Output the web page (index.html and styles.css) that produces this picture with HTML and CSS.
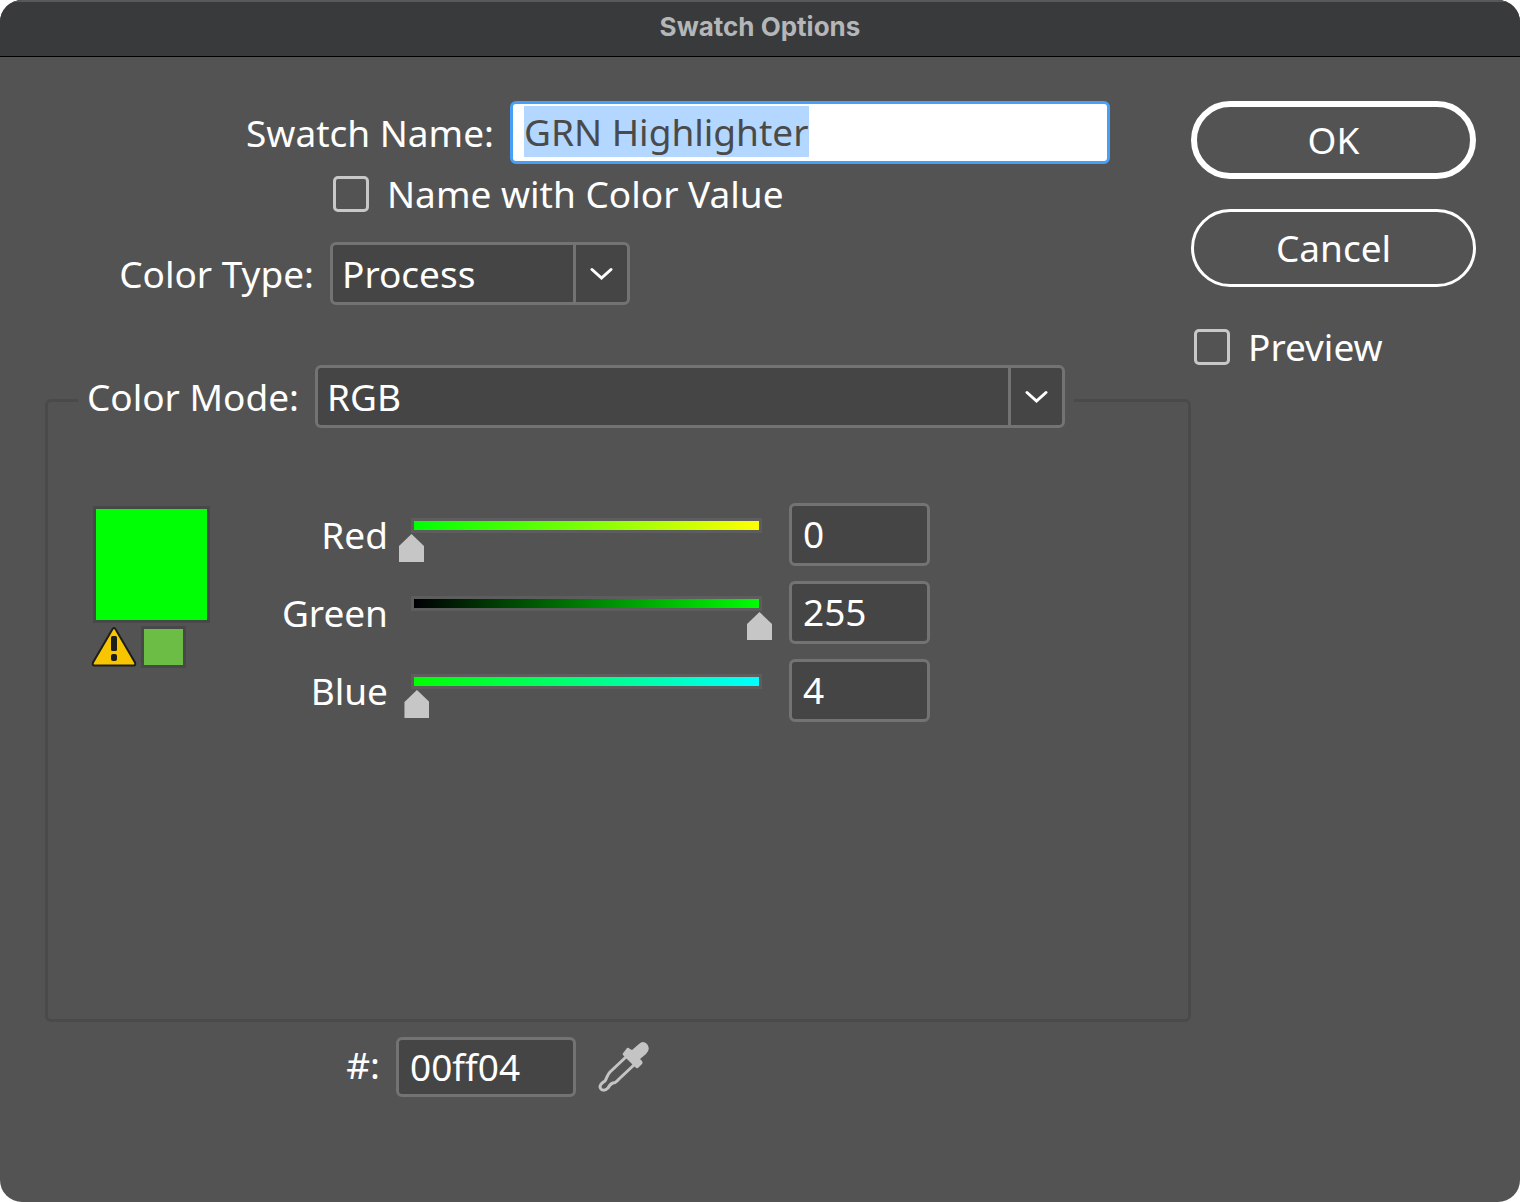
FILE: index.html
```html
<!DOCTYPE html>
<html lang="en">
<head>
    <meta charset="UTF-8">
    <meta name="viewport" content="width=device-width, initial-scale=1.0">
    <title>Swatch Options</title>
    <link rel="stylesheet" href="styles.css">
</head>
<body>

    <form class="dialog">
        <header class="titlebar">
            <h1>Swatch Options</h1>
        </header>

        <div class="content">
            <main class="main">
                <div class="row name-row">
                    <label for="swatchName">Swatch Name:</label>
                    <input type="text" id="swatchName" class="name-input" value="GRN Highlighter" spellcheck="false" autocomplete="off">
                </div>

                <div class="row check-row">
                    <input type="checkbox" id="nameWithValue">
                    <label for="nameWithValue">Name with Color Value</label>
                </div>

                <div class="row type-row">
                    <label for="colorType">Color Type:</label>
                    <div class="select">
                        <select id="colorType">
                            <option selected>Process</option>
                        </select>
                        <span class="arrow">
                            <svg width="24" height="14" viewBox="0 0 24 14"><path d="M2 2.500L11.500 11L21 2.500"/></svg>
                        </span>
                    </div>
                </div>

                <fieldset class="mode">
                    <legend>
                        <div class="row mode-row">
                            <label for="colorMode">Color Mode:</label>
                            <div class="select">
                                <select id="colorMode">
                                    <option selected>RGB</option>
                                </select>
                                <span class="arrow">
                                    <svg width="24" height="14" viewBox="0 0 24 14"><path d="M2 2.500L11.500 11L21 2.500"/></svg>
                                </span>
                            </div>
                        </div>
                    </legend>

                    <div class="mixer">
                        <div class="preview">
                            <div class="swatch"></div>
                            <div class="gamut">
                                <svg width="45" height="42" viewBox="0 0 45 42">
                                    <path d="M19.4 3.200Q21 .8 22.600 3.200L42 36.500Q43 39.500 40.500 39.500H1.500Q-1 39.500 0 36.500Z" fill="#f7c600" stroke="#1d1d1b" stroke-width="2"/>
                                    <rect x="18" y="10" width="6" height="15" rx="1.500" fill="#1d1d1b"/>
                                    <rect x="18" y="28" width="6" height="7" rx="2" fill="#1d1d1b"/>
                                </svg>
                                <div class="safe-swatch"></div>
                            </div>
                        </div>

                        <div class="channels">
                            <label for="red">Red</label>
                            <input type="range" id="red" class="slider red" min="0" max="255" value="0">
                            <input type="text" class="value" value="0" aria-label="Red value">

                            <label for="green">Green</label>
                            <input type="range" id="green" class="slider green" min="0" max="255" value="255">
                            <input type="text" class="value" value="255" aria-label="Green value">

                            <label for="blue">Blue</label>
                            <input type="range" id="blue" class="slider blue" min="0" max="255" value="4">
                            <input type="text" class="value" value="4" aria-label="Blue value">
                        </div>
                    </div>
                </fieldset>

                <div class="row hex-row">
                    <label for="hex">#:</label>
                    <input type="text" id="hex" class="value hex" value="00ff04" spellcheck="false">
                    <button type="button" class="picker" aria-label="Eyedropper">
                        <svg width="52" height="52" viewBox="0 0 52 52">
                            <path d="M28 16L12 31C9 34 9 37 7 40C4 42 2 43 2 46C3 50 7 50 10 47C11 45 12 43 15 42C18 42 19 40 21 38L37 23" fill="none" stroke="#c4c4c4" stroke-width="3"/>
                            <path d="M26 11L29 7Q30 6 32 8L34 9L41 3Q45 -1 49 3Q53 8 48 13L42 18L44 20Q45 22 44 23L40 27Q39 28 37 26L25 14Q24 13 26 11Z" fill="#c4c4c4"/>
                        </svg>
                    </button>
                </div>
            </main>

            <aside class="actions">
                <button type="submit" class="btn primary">OK</button>
                <button type="button" class="btn">Cancel</button>
                <div class="row preview-row">
                    <input type="checkbox" id="preview">
                    <label for="preview">Preview</label>
                </div>
            </aside>
        </div>
    </form>

    <script>
        let nameInput = document.getElementById("swatchName");
        nameInput.focus();
        nameInput.select();
    </script>

</body>
</html>
```
FILE: styles.css
```css
* {
    box-sizing: border-box;
}

body {
    margin: 0;
    background-color: #fff;
    color: #fff;
    font-family: "Noto Sans", "Open Sans", sans-serif;
    font-size: 37px;
    font-weight: 450;
    line-height: 44px;
}

input, select, button {
    font: inherit;
    color: inherit;
    margin: 0;
}

.dialog {
    display: flex;
    flex-direction: column;
    min-height: 100vh;
    background-color: #535353;
    border-radius: 22px;
    overflow: hidden;
}

/* Title bar */
.titlebar {
    height: 57px;
    background-color: #393a3c;
    border-top: 2px solid #58595b;
    border-bottom: 1px solid #000;
    text-align: center;
}

.titlebar h1 {
    margin: 0;
    color: #b5b6b7;
    font-family: Inter, sans-serif;
    font-size: 26px;
    font-weight: 700;
    line-height: 50px;
}

.content {
    flex: 1;
    display: flex;
    padding: 44px 44px 105px 45px;
}

.main {
    flex: 1;
    display: flex;
    flex-direction: column;
}

.row {
    display: flex;
    align-items: center;
    gap: 16px;
}

.row label {
    white-space: nowrap;
}

/* Text boxes and drop-downs */
.name-input {
    width: 600px;
    height: 63px;
    padding: 0 11px 2px;
    border: 3px solid #479ff8;
    border-radius: 6px;
    outline: none;
    background-color: #fff;
    color: #4a4a4a;
}

.name-input::selection {
    background-color: #b3d7ff;
    color: #4a4a4a;
}

.select {
    position: relative;
    height: 63px;
}

.select select {
    appearance: none;
    width: 100%;
    height: 100%;
    padding: 0 60px 0 9px;
    border: 3px solid #737373;
    border-radius: 6px;
    outline: none;
    background-color: #454545;
}

.arrow {
    position: absolute;
    top: 3px;
    right: 3px;
    bottom: 3px;
    width: 54px;
    display: flex;
    align-items: center;
    justify-content: center;
    border-left: 3px solid #737373;
    pointer-events: none;
}

.arrow path {
    fill: none;
    stroke: #fff;
    stroke-width: 3;
    stroke-linecap: round;
}

.value {
    width: 141px;
    height: 63px;
    padding: 0 11px 2px;
    border: 3px solid #737373;
    border-radius: 6px;
    outline: none;
    background-color: #454545;
}

input[type="checkbox"] {
    appearance: none;
    width: 36px;
    height: 36px;
    border: 3px solid #c8c8c8;
    border-radius: 5px;
}

/* Rows above the group box */
.name-row label {
    width: 449px;
    text-align: right;
}

.check-row {
    gap: 18px;
    height: 36px;
    margin-top: 12px;
    padding-left: 288px;
}

.type-row {
    margin-top: 30px;
}

.type-row label {
    width: 269px;
    text-align: right;
}

.type-row .select {
    width: 300px;
}

/* Group box */
.mode {
    flex: 1;
    margin: 60px 0 0;
    padding: 0 30px;
    border: 3px solid #4a4a4a;
    border-radius: 6px;
}

.mode legend {
    width: calc(100% - 84px);
    padding: 0 9px 8px 0;
}

.mode-row label {
    width: 221px;
    text-align: right;
}

.mode-row .select {
    flex: 1;
}

.mixer {
    display: flex;
    gap: 60px;
    padding: 67px 0 0 15px;
}

.preview {
    display: flex;
    flex-direction: column;
    gap: 3px;
    padding-top: 3px;
}

.swatch {
    width: 117px;
    height: 117px;
    border: 3px solid #484848;
    background-color: #00ff04;
}

.gamut {
    display: flex;
    gap: 3px;
}

.gamut svg {
    overflow: visible;
}

.safe-swatch {
    width: 45px;
    height: 42px;
    border: 3px solid #484848;
    background-color: #6bbd45;
}

/* Colour channels */
.channels {
    display: grid;
    grid-template-columns: 118px 373px 141px;
    align-items: center;
    row-gap: 15px;
}

.channels label {
    text-align: right;
}

.channels .slider {
    margin-left: 11px;
}

.channels .value {
    margin-left: 28px;
}

.slider {
    appearance: none;
    width: 373px;
    height: 63px;
    background: none;
    outline: none;
}

.red {
    --ramp: linear-gradient(to right, #00ff04, #ffff04);
}

.green {
    --ramp: linear-gradient(to right, #000004, #00ff04);
}

.blue {
    --ramp: linear-gradient(to right, #00ff00, #00ffff);
}

.slider::-webkit-slider-runnable-track {
    height: 63px;
    background-image: var(--ramp), linear-gradient(#5d5d5d, #5d5d5d);
    background-position: 15px 18px, 12px 15px;
    background-size: calc(100% - 28px) 9px, calc(100% - 22px) 15px;
    background-repeat: no-repeat;
}

.slider::-webkit-slider-thumb {
    appearance: none;
    width: 25px;
    height: 28px;
    margin-top: 31px;
    background-color: #c6c6c6;
    clip-path: polygon(50% 0, 100% 43%, 100% 100%, 0 100%, 0 43%);
}

/* Hex value */
.hex-row {
    margin-top: 15px;
}

.hex-row label {
    width: 335px;
    padding-bottom: 4px;
    text-align: right;
}

.hex {
    width: 180px;
    height: 60px;
}

.picker {
    width: 52px;
    height: 52px;
    margin-left: 6px;
    padding: 0;
    border: none;
    background: none;
}

.picker svg {
    display: block;
}

/* Right column */
.actions {
    width: 285px;
    display: flex;
    flex-direction: column;
    gap: 30px;
}

.btn {
    height: 78px;
    padding: 0;
    border: 3px solid #fff;
    border-radius: 39px;
    background: none;
}

.primary {
    border-width: 6px;
}

.preview-row {
    gap: 18px;
    height: 36px;
    margin-top: 12px;
    padding-left: 3px;
}
```
